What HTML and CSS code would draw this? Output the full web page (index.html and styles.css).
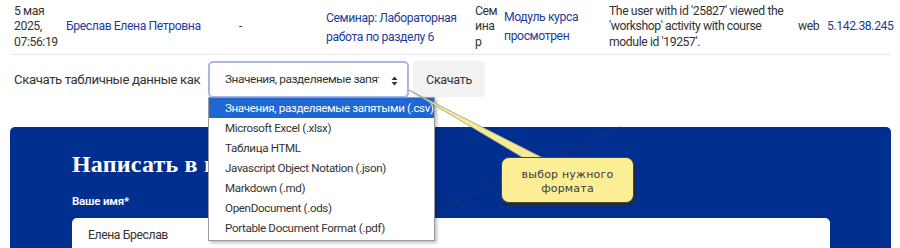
FILE: index.html
```html
<!DOCTYPE html>
<html lang="ru">
<head>
<meta charset="utf-8">
<title>Журнал событий</title>
<link rel="stylesheet" href="styles.css">
</head>
<body>
<div class="page">
  <div class="logrow">
    <div class="cell c-date">5 мая<br>2025,<br>07:56:19</div>
    <div class="cell c-name"><a href="#">Бреслав Елена Петровна</a></div>
    <div class="cell c-dash">-</div>
    <div class="cell c-ctx"><a href="#">Семинар: Лабораторная работа по разделу 6</a></div>
    <div class="cell c-comp">Семинар</div>
    <div class="cell c-event"><a href="#">Модуль курса просмотрен</a></div>
    <div class="cell c-desc">The user with id '25827' viewed the 'workshop' activity with course module id '19257'.</div>
    <div class="cell c-origin">web</div>
    <div class="cell c-ip"><a href="#">5.142.38.245</a></div>
  </div>

  <div class="download">
    <span class="dl-label">Скачать табличные данные как</span>
    <div class="select">
      <span class="select-text">Значения, разделяемые запятыми (.csv)</span>
      <svg class="select-arrow" width="7" height="10" viewBox="0 0 7 10"><path d="M3.5 0.5 L6.5 4 H0.5 Z M3.5 9.5 L6.5 6 H0.5 Z" fill="#333"/></svg>
    </div>
    <button class="dl-btn">Скачать</button>
  </div>

  <section class="panel">
    <h2 class="panel-title">Написать в поддержку</h2>
    <div class="field-label">Ваше имя*</div>
    <div class="field-input">Елена Бреслав</div>
  </section>

  <svg class="diag" width="900" height="248" viewBox="0 0 900 248"><line x1="621" y1="127" x2="420" y2="218" stroke="#1d2f72" stroke-width="1.2"/></svg>

  <ul class="dropdown">
    <li class="opt active">Значения, разделяемые запятыми (.csv)</li>
    <li class="opt">Microsoft Excel (.xlsx)</li>
    <li class="opt">Таблица HTML</li>
    <li class="opt">Javascript Object Notation (.json)</li>
    <li class="opt">Markdown (.md)</li>
    <li class="opt">OpenDocument (.ods)</li>
    <li class="opt">Portable Document Format (.pdf)</li>
  </ul>

  <svg class="wedge" width="900" height="248" viewBox="0 0 900 248"><path d="M409 90 L527 160 L547 160 Z" fill="#f6ea93" stroke="#9a9a8a" stroke-width="0.8" stroke-linejoin="round"/></svg>

  <div class="callout">выбор нужного<br>формата</div>
</div>
</body>
</html>
```
FILE: styles.css
```css
* { box-sizing: border-box; }
html, body { margin: 0; padding: 0; background: #fff; }
body { font-family: Roboto, "Noto Sans", sans-serif; color: #333; letter-spacing: -0.4px; }
.page { position: relative; width: 900px; height: 248px; overflow: hidden; }

a { color: #1d3d9a; text-decoration: none; }

.logrow {
  display: grid;
  grid-template-columns: 52px 173px 87px 149px 29px 105px 189px 29px 1fr;
  align-items: center;
  height: 55px;
  margin: 0 9px 0 10px;
  padding-left: 4px;
  border-bottom: 1px solid #e9e9e9;
  font-size: 12.2px;
  line-height: 15.5px;
}
.cell { padding-right: 4px; }
.c-ctx a, .c-event a { display: block; line-height: 19px; }
.c-ctx { padding-top: 2px; padding-right: 16px; }
.c-comp { width: 25px; padding: 0; word-break: break-all; }
.c-desc { padding-right: 4px; }

.download {
  display: flex;
  align-items: center;
  margin: 6px 0 0 14px;
  height: 36px;
}
.dl-label { width: 194px; font-size: 13.2px; }
.select {
  position: relative;
  display: flex;
  align-items: center;
  width: 201px;
  height: 37px;
  padding: 0 28px 0 15px;
  border: 2px solid #a9b5e3;
  border-radius: 5px;
  background: #fff;
  font-size: 11.8px;
  overflow: hidden;
}
.select-text { white-space: nowrap; overflow: hidden; }
.select-arrow { position: absolute; right: 9px; top: 13px; }
.dl-btn {
  margin-left: 4px;
  width: 72px;
  height: 36px;
  border: 0;
  border-radius: 4px;
  background: #f2f2f2;
  font: 12.5px Roboto, "Noto Sans", sans-serif;
  letter-spacing: -0.3px;
  color: #333;
}

.panel {
  margin: 30px 9px 0 10px;
  height: 130px;
  padding: 23px 61px 0 62px;
  background: #012f8f;
  border-radius: 5px 5px 0 0;
  color: #fff;
}
.panel-title {
  margin: 0;
  font-family: "Liberation Serif", serif;
  font-weight: bold;
  font-size: 24px;
  line-height: 28px;
  letter-spacing: 0.2px;
  white-space: nowrap;
}
.field-label {
  margin-top: 16px;
  font-size: 11.5px;
  font-weight: 600;
  line-height: 14px;
  letter-spacing: -0.2px;
}
.field-input {
  margin-top: 10px;
  height: 50px;
  padding: 10px 16px;
  background: #fff;
  border-radius: 5px;
  color: #333;
  font-size: 12.2px;
}

.diag { position: absolute; left: 0; top: 0; pointer-events: none; }

.dropdown {
  position: absolute;
  left: 208px;
  top: 97px;
  width: 227px;
  margin: 0;
  padding: 0 0 2px;
  list-style: none;
  background: #fff;
  border: 1px solid #9d9d9d;
  box-shadow: 2px 2px 3px rgba(0,0,0,0.25);
  font-family: Roboto, "Noto Sans", sans-serif;
  font-size: 11.6px;
  letter-spacing: -0.35px;
  color: #333;
}
.opt { height: 20px; line-height: 20px; padding-left: 16px; white-space: nowrap; }
.opt.active { background: #1f67d2; color: #fff; }

.wedge { position: absolute; left: 0; top: 0; pointer-events: none; }

.callout {
  position: absolute;
  left: 501px;
  top: 157px;
  width: 133px;
  height: 46px;
  padding-top: 10px;
  background: #fcee95;
  border: 1px solid #4a4a3a;
  border-radius: 8px;
  box-shadow: 1px 2px 0 #2a2a2a;
  font-family: "DejaVu Sans", sans-serif;
  font-size: 11px;
  line-height: 14px;
  color: #3a3a3a;
  text-align: center;
  letter-spacing: 0.2px;
}
```
